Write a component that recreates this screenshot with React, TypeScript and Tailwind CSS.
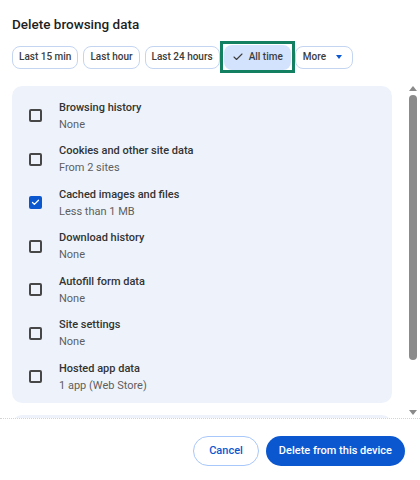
import { Check } from 'lucide-react'

const ROWS = [
  { title: 'Browsing history', sub: 'None', checked: false },
  { title: 'Cookies and other site data', sub: 'From 2 sites', checked: false },
  { title: 'Cached images and files', sub: 'Less than 1 MB', checked: true },
  { title: 'Download history', sub: 'None', checked: false },
  { title: 'Autofill form data', sub: 'None', checked: false },
  { title: 'Site settings', sub: 'None', checked: false },
  { title: 'Hosted app data', sub: '1 app (Web Store)', checked: false },
]

const RANGES = ['Last 15 min', 'Last hour', 'Last 24 hours']

function Checkbox({ checked }: { checked: boolean }) {
  if (checked) {
    return (
      <span className="flex h-[13px] w-[13px] shrink-0 items-center justify-center rounded-[2px] bg-[#0b57d0]">
        <Check className="h-[9px] w-[9px] text-white" strokeWidth={3.5} />
      </span>
    )
  }
  return <span className="h-[13px] w-[13px] shrink-0 rounded-[2px] border-2 border-[#474747]" />
}

export default function App() {
  return (
    <div
      className="flex h-[480px] w-[420px] flex-col overflow-hidden bg-white text-[#1f1f1f]"
      style={{ fontFamily: 'Roboto, "Noto Sans", sans-serif' }}
    >
      {/* Header */}
      <div className="px-3 pt-[14px]">
        <h1 className="text-[13.5px] font-medium leading-[20px]">Delete browsing data</h1>
        <div className="mt-[7px] flex items-center gap-[5px] whitespace-nowrap">
          {RANGES.map((r) => (
            <button
              key={r}
              className="h-[23px] shrink-0 rounded-[8px] border border-[#c4d5f2] px-[6px] text-[10px] font-medium leading-none text-[#3c3c3c]"
            >
              {r}
            </button>
          ))}
          <div className="ml-[-5px] flex h-[32px] shrink-0 items-center border-[3px] border-[#138061] px-[1px]">
            <button className="flex h-[25px] items-center gap-[5px] rounded-[8px] bg-[#d3e3fd] px-[8px] text-[10px] font-medium leading-none text-[#3c3c3c]">
              <Check className="h-[12px] w-[12px]" strokeWidth={2.2} />
              All time
            </button>
          </div>
          <button className="ml-[-5px] flex h-[23px] shrink-0 items-center gap-[10px] rounded-[8px] border border-[#c4d5f2] pl-[7px] pr-[10px] text-[10px] font-medium leading-none text-[#3c3c3c]">
            More
            <span className="h-0 w-0 border-l-[3px] border-r-[3px] border-t-[4px] border-l-transparent border-r-transparent border-t-[#0b57d0]" />
          </button>
        </div>
      </div>

      {/* Scroll area */}
      <div className="mt-[8px] flex min-h-0 flex-1">
        <div className="min-w-0 flex-1 overflow-hidden pl-3 pr-[15px] pt-[5px]">
          <div className="rounded-[10px] bg-[#eef3fb] pb-[4px] pl-[17px] pt-[8px]">
            {ROWS.map((row) => (
              <div key={row.title} className="flex h-[43.5px] items-center gap-[17px]">
                <Checkbox checked={row.checked} />
                <div className="flex flex-col">
                  <span className="text-[11px] font-medium leading-[17px] text-[#333]">{row.title}</span>
                  <span className="text-[11px] leading-[17px] text-[#5e5e5e]">{row.sub}</span>
                </div>
              </div>
            ))}
          </div>
          <div className="mt-3 h-10 rounded-[10px] bg-[#eef3fb]" />
        </div>

        {/* Scrollbar */}
        <div className="flex w-[13px] shrink-0 flex-col items-center pr-[2px] pt-[5px]">
          <span className="h-0 w-0 border-b-[5px] border-l-[4px] border-r-[4px] border-b-[#8a8a8a] border-l-transparent border-r-transparent" />
          <span className="mt-[4px] h-[265px] w-[8px] rounded-full bg-[#8b8b8b]" />
          <span className="flex-1" />
          <span className="mb-[3px] h-0 w-0 border-l-[4px] border-r-[4px] border-t-[5px] border-l-transparent border-r-transparent border-t-[#8a8a8a]" />
        </div>
      </div>

      {/* Footer */}
      <div className="flex h-[62px] shrink-0 items-start justify-end gap-[7px] border-t border-dotted border-[#d4d4d4] pr-[15px] pt-[17px]">
        <button className="h-[30px] rounded-full border border-[#a8c7fa] px-[15px] text-[11px] font-medium text-[#0b57d0]">
          Cancel
        </button>
        <button className="h-[30px] rounded-full bg-[#0b57d0] px-[13px] text-[11px] font-medium text-white">
          Delete from this device
        </button>
      </div>
    </div>
  )
}
